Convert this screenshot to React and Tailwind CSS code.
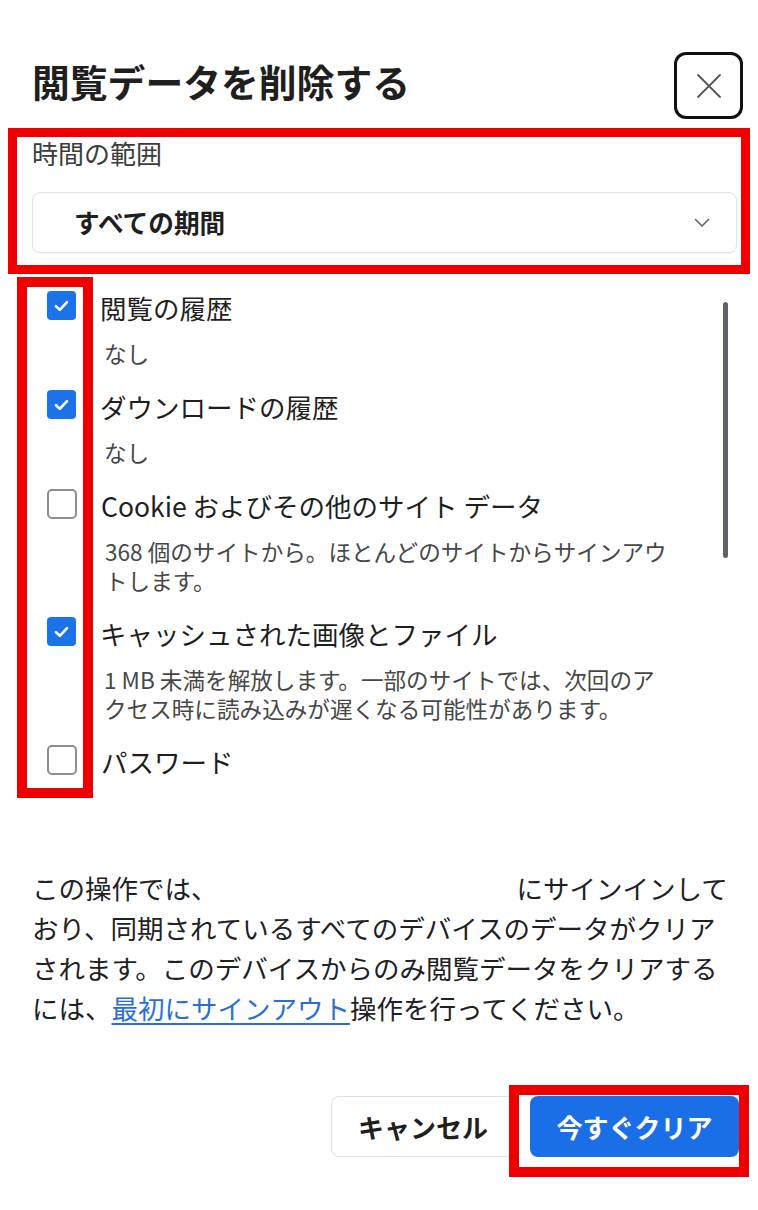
import React, { useState } from 'react';

const FONT = { fontFamily: '"Noto Sans CJK JP", "Noto Sans", sans-serif' };

const items = [
  { id: 'history', label: '閲覧の履歴', desc: ['なし'], checked: true },
  { id: 'downloads', label: 'ダウンロードの履歴', desc: ['なし'], checked: true },
  {
    id: 'cookies',
    label: 'Cookie およびその他のサイト データ',
    desc: ['368 個のサイトから。ほとんどのサイトからサインアウ', 'トします。'],
    checked: false
  },
  {
    id: 'cache',
    label: 'キャッシュされた画像とファイル',
    desc: ['1 MB 未満を解放します。一部のサイトでは、次回のア', 'クセス時に読み込みが遅くなる可能性があります。'],
    checked: true
  },
  { id: 'passwords', label: 'パスワード', desc: [], checked: false }
];

const CheckBox = ({ checked, onClick }) => (
  <button
    onClick={onClick}
    className={
      checked
        ? 'mt-[1px] w-[29px] h-[29px] shrink-0 rounded-[4px] bg-[#1a73e8] flex items-center justify-center'
        : 'mt-[1px] w-[30px] h-[30px] shrink-0 rounded-[5px] border-2 border-[#8e8e8e] bg-white'
    }
  >
    {checked && (
      <svg width="15" height="12" viewBox="0 0 15 12" fill="none">
        <path d="M2 6.2 L5.8 9.8 L13 2.2" stroke="white" strokeWidth="2.6" strokeLinecap="round" strokeLinejoin="round" />
      </svg>
    )}
  </button>
);

const App = () => {
  const [checks, setChecks] = useState(
    Object.fromEntries(items.map((i) => [i.id, i.checked]))
  );

  const toggle = (id) => setChecks((c) => ({ ...c, [id]: !c[id] }));

  return (
    <div className="relative w-[758px] h-[1210px] bg-white overflow-hidden text-[#202124]" style={FONT}>
      {/* header */}
      <div className="flex justify-between items-start pt-[52px] pl-[32px] pr-[15px]">
        <h1 className="mt-[7px] text-[37.8px] leading-[44px] font-bold text-[#1f1f1f]">閲覧データを削除する</h1>
        <button className="w-[69px] h-[67px] rounded-[12px] border-[3px] border-[#111] flex items-center justify-center">
          <svg width="26" height="26" viewBox="0 0 26 26" fill="none">
            <path d="M2 2 L24 24 M24 2 L2 24" stroke="#555" strokeWidth="1.8" strokeLinecap="round" />
          </svg>
        </button>
      </div>

      {/* time range */}
      <div className="mt-[9px] mx-[8px] h-[146px] border-[9px] border-[#ee0000] pl-[15px] pr-[4px]">
        <p className="text-[26px] leading-[32px] text-[#3c3c3c]">時間の範囲</p>
        <div className="mt-[23px] h-[61px] rounded-[8px] border border-[#e3e3e3] shadow-[0_1px_2px_rgba(0,0,0,0.05)] flex items-center justify-between pl-[41px] pr-[26px]">
          <span className="text-[25.7px] font-bold text-[#1f1f1f]">すべての期間</span>
          <svg width="16" height="10" viewBox="0 0 16 10" fill="none">
            <path d="M1.5 1.5 L8 8 L14.5 1.5" stroke="#5f6368" strokeWidth="1.6" strokeLinecap="round" strokeLinejoin="round" />
          </svg>
        </div>
      </div>

      {/* data types */}
      <div className="mt-[16px] flex">
        <div className="flex-1 flex flex-col gap-[21px] pl-[47px]">
          {items.map((item) => (
            <div key={item.id} className="flex items-start gap-[24px]">
              <CheckBox checked={checks[item.id]} onClick={() => toggle(item.id)} />
              <div className="flex-1">
                <p className="text-[26.5px] leading-[36px] text-[#1f1f1f] whitespace-nowrap">{item.label}</p>
                {item.desc.length > 0 && (
                  <p className="mt-[13px] pl-[4px] text-[22.6px] leading-[29px] text-[#474747] whitespace-nowrap">
                    {item.desc.map((line, i) => (
                      <React.Fragment key={i}>
                        {i > 0 && <br />}
                        {line}
                      </React.Fragment>
                    ))}
                  </p>
                )}
              </div>
            </div>
          ))}
        </div>
        <div className="mt-[12px] mr-[30px] w-[5px] h-[256px] rounded-full bg-[#5f6368]" />
      </div>

      {/* sync notice */}
      <p className="mt-[88px] px-[32px] text-[26.5px] leading-[40px] text-[#202124] whitespace-nowrap">
        この操作では、<span className="inline-block w-[299px]" />にサインインして
        <br />
        おり、同期されているすべてのデバイスのデータがクリア
        <br />
        されます。このデバイスからのみ閲覧データをクリアする
        <br />
        には、<a href="#" className="text-[#2a6fd6] underline underline-offset-4">最初にサインアウト</a>操作を行ってください。
      </p>

      {/* actions */}
      <div className="mt-[68px] flex justify-end gap-[15px] pr-[19px]">
        <button className="w-[184px] h-[61px] rounded-[8px] border border-[#e0e0e0] bg-white text-[26px] font-bold text-[#1f1f1f]">
          キャンセル
        </button>
        <button className="w-[209px] h-[61px] rounded-[8px] bg-[#1a6fe6] text-[26px] font-bold text-white">
          今すぐクリア
        </button>
      </div>

      {/* annotation boxes */}
      <div className="absolute left-[17px] top-[277px] w-[76px] h-[521px] border-[10px] border-[#ee0000] pointer-events-none" />
      <div className="absolute left-[509px] top-[1085px] w-[240px] h-[92px] border-[10px] border-[#ee0000] pointer-events-none" />
    </div>
  );
};

export default App;
